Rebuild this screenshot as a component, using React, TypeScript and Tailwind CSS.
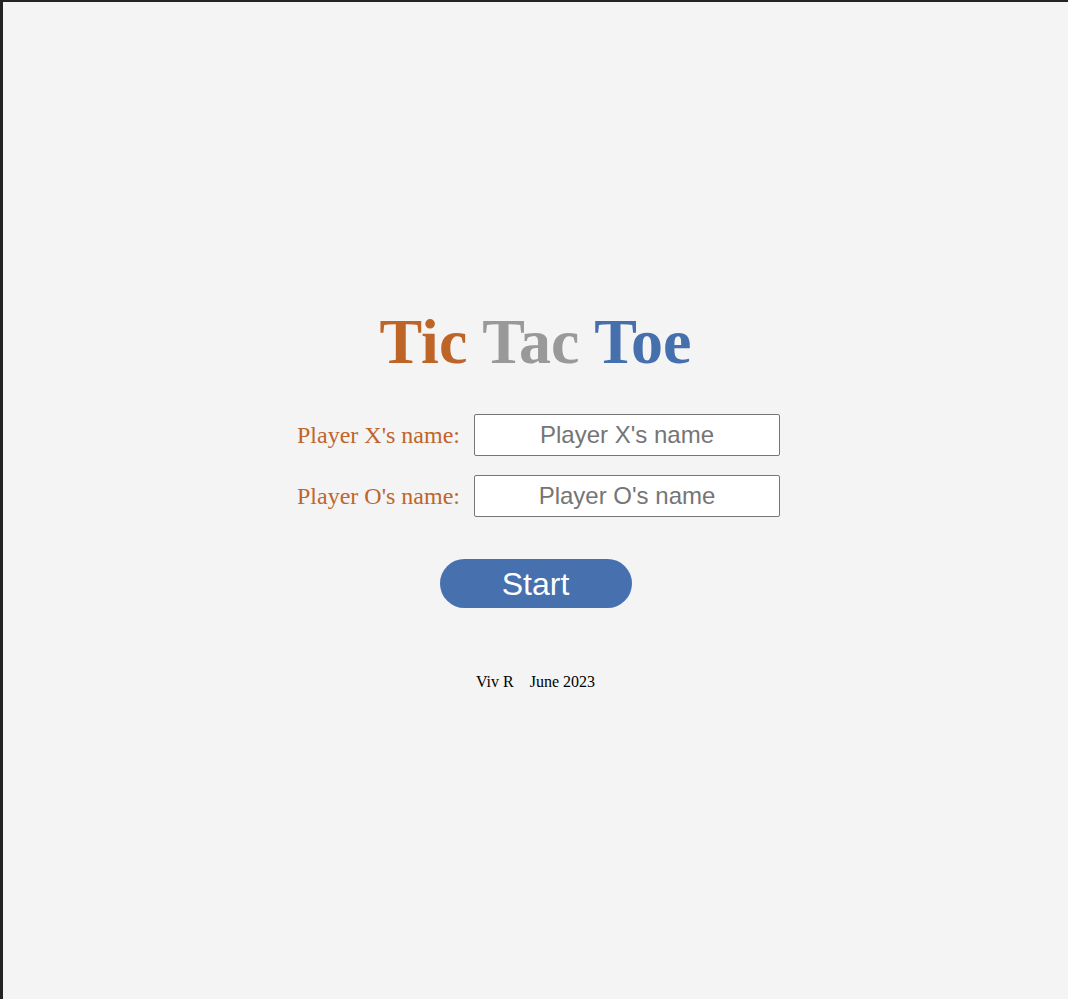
import React from "react";

export default function App() {
  return (
    <div className="min-h-screen bg-[#f4f4f4] border-l-[3px] border-t-2 border-[#232323] flex flex-col items-center pt-[308px]">
      <h1
        className="text-[64px] leading-none font-bold m-0"
        style={{ fontFamily: '"Liberation Serif", "Times New Roman", serif' }}
      >
        <span className="text-[#bf6427]">Tic</span>{" "}
        <span className="text-[#999999]">Tac</span>{" "}
        <span className="text-[#4570ad]">Toe</span>
      </h1>

      <div className="mt-[40px] flex flex-col gap-[19px] pl-[6px]">
        {["X", "O"].map((p) => (
          <div key={p} className="flex items-center gap-[15px] h-[42px]">
            <label
              className="text-[24px] leading-[26px] text-[#c0652a] w-[162px] whitespace-nowrap"
              style={{ fontFamily: '"Liberation Serif", "Times New Roman", serif' }}
            >
              Player {p}'s name:
            </label>
            <input
              type="text"
              placeholder={`Player ${p}'s name`}
              className="w-[306px] h-[42px] bg-white border border-[#767676] rounded-[2px] text-center text-[24px] text-black placeholder:text-[#757575] outline-none"
              style={{ fontFamily: '"Liberation Sans", Arial, sans-serif' }}
            />
          </div>
        ))}
      </div>

      <button
        className="mt-[42px] w-[192px] h-[49px] rounded-full bg-[#4670ae] text-white text-[32px] leading-none"
        style={{ fontFamily: '"Liberation Sans", Arial, sans-serif' }}
      >
        Start
      </button>

      <div
        className="mt-[62px] flex gap-[16px] text-[16px] text-black"
        style={{ fontFamily: '"Liberation Serif", "Times New Roman", serif' }}
      >
        <span>Viv R</span>
        <span>June 2023</span>
      </div>
    </div>
  );
}
